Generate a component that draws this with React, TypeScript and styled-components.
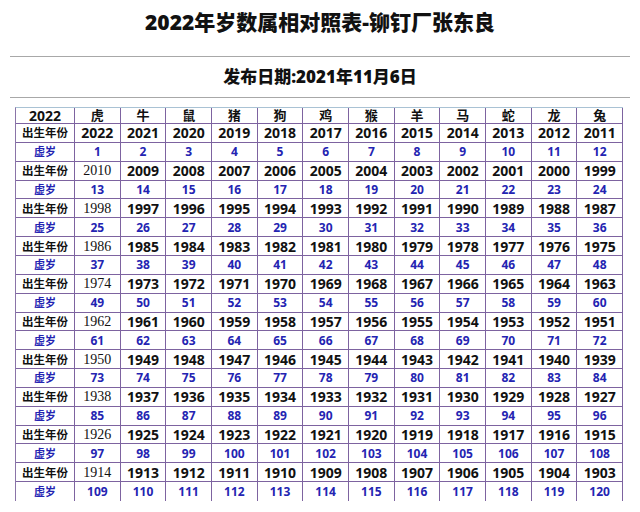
import React from "react";
import styled, { createGlobalStyle } from "styled-components";

const Global = createGlobalStyle`
  html, body { margin: 0; padding: 0; background: #fff; }
  body { font-family: "Noto Sans", "Noto Sans CJK SC", sans-serif; color: #111; }
`;

const Page = styled.div`
  width: 640px;
  height: 512px;
  padding: 0 10px;
  box-sizing: border-box;
  overflow: hidden;
`;

const Title = styled.h1`
  margin: 0;
  height: 44px;
  line-height: 44px;
  text-align: center;
  font-family: "Noto Sans", "Noto Sans CJK SC", sans-serif;
  font-size: 21px;
  font-weight: 900;
  color: #111;
`;

const Rule = styled.div<{ $top: number }>`
  margin-top: ${(p) => p.$top}px;
  height: 1px;
  background: #a8a8a8;
`;

const Subtitle = styled.h2`
  margin: 0;
  height: 40px;
  line-height: 40px;
  text-align: center;
  font-family: "Noto Sans", "Noto Sans CJK SC", sans-serif;
  font-size: 17px;
  font-weight: 900;
  color: #111;
`;

const Grid = styled.div`
  margin: 9px 0 0 5px;
  width: 608px;
  height: 394px;
  box-sizing: border-box;
  display: grid;
  grid-template-columns: 59px repeat(12, 1fr);
  grid-template-rows: 16px repeat(20, 1fr);
  border-top: 1px solid #a9c2d4;
  border-left: 1px solid #8a74a8;
`;

type Kind = "head" | "label" | "year" | "serif" | "ageLabel" | "age";

const sizes: Record<Kind, string> = {
  head: "13px",
  label: "11.5px",
  year: "14px",
  serif: "14px",
  ageLabel: "11px",
  age: "12px",
};

const Cell = styled.div<{ $kind: Kind; $last?: boolean }>`
  display: flex;
  align-items: center;
  justify-content: center;
  min-width: 0;
  min-height: 0;
  border-right: 1px solid #7d63a0;
  border-bottom: ${(p) => (p.$last ? "none" : "1px solid #7d63a0")};
  white-space: nowrap;
  line-height: 13px;
  font-weight: ${(p) => (p.$kind === "serif" ? 400 : 700)};
  font-family: ${(p) =>
    p.$kind === "serif"
      ? `"Liberation Serif", "Times New Roman", serif`
      : `"Noto Sans", "Noto Sans CJK SC", sans-serif`};
  font-size: ${(p) => sizes[p.$kind]};
  color: ${(p) => (p.$kind === "ageLabel" || p.$kind === "age" ? "#2424b2" : "#111")};
`;

const animals = ["虎", "牛", "鼠", "猪", "狗", "鸡", "猴", "羊", "马", "蛇", "龙", "兔"];

export default function App() {
  const rows: React.ReactNode[] = [];
  for (let r = 0; r < 10; r++) {
    const base = 2022 - 12 * r;
    const last = r === 9;
    rows.push(
      <React.Fragment key={`y${r}`}>
        <Cell $kind="label">出生年份</Cell>
        {animals.map((_, c) => (
          <Cell key={c} $kind={r > 0 && c === 0 ? "serif" : "year"}>
            {base - c}
          </Cell>
        ))}
      </React.Fragment>
    );
    rows.push(
      <React.Fragment key={`a${r}`}>
        <Cell $kind="ageLabel" $last={last}>虚岁</Cell>
        {animals.map((_, c) => (
          <Cell key={c} $kind="age" $last={last}>
            {12 * r + 1 + c}
          </Cell>
        ))}
      </React.Fragment>
    );
  }
  return (
    <Page>
      <Global />
      <Title>2022年岁数属相对照表-铆钉厂张东良</Title>
      <Rule $top={12} />
      <Subtitle>发布日期:2021年11月6日</Subtitle>
      <Rule $top={0} />
      <Grid>
        <Cell $kind="year">2022</Cell>
        {animals.map((a) => (
          <Cell key={a} $kind="head">
            {a}
          </Cell>
        ))}
        {rows}
      </Grid>
    </Page>
  );
}
